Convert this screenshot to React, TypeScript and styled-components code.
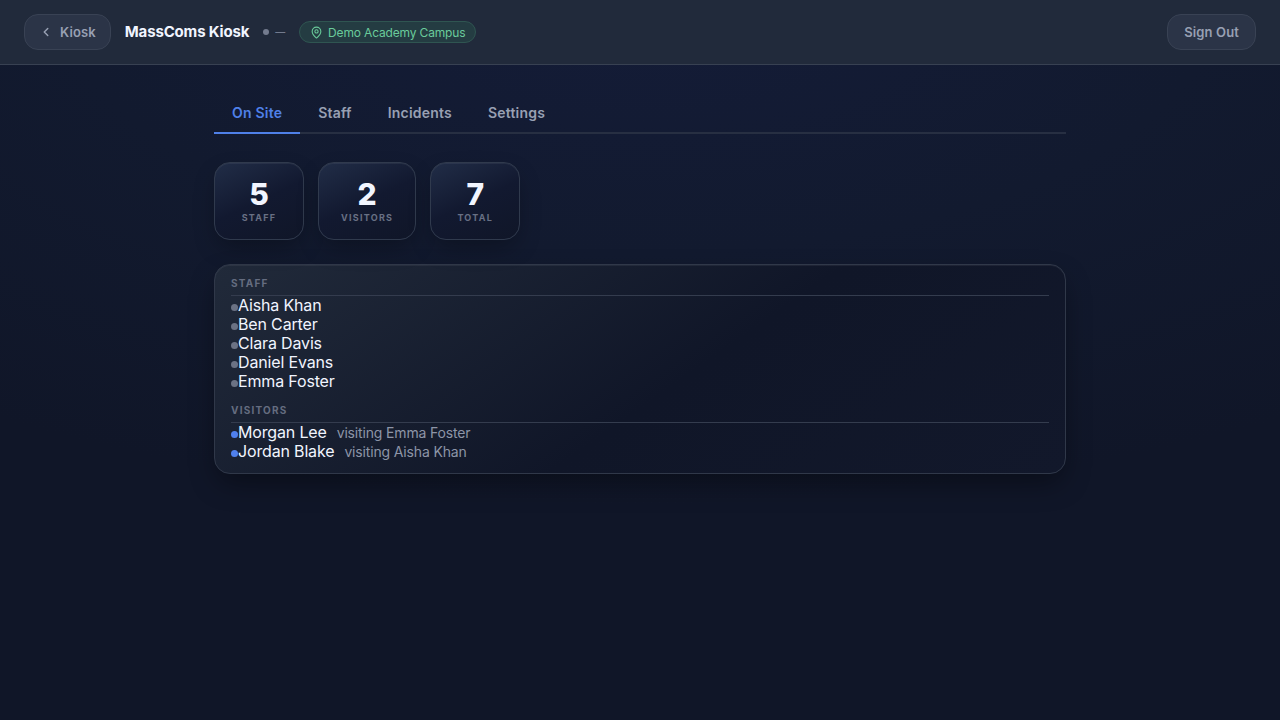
import React, { useState } from "react";
import styled, { createGlobalStyle } from "styled-components";
import { ChevronLeft, MapPin } from "lucide-react";

const GlobalStyle = createGlobalStyle`
  *, *::before, *::after { box-sizing: border-box; }
  html { background: #101628; }
  body {
    margin: 0;
    min-height: 100vh;
    font-family: Inter, "Liberation Sans", sans-serif;
    font-size: 16px;
    letter-spacing: -0.01em;
    color: #f1f5ff;
    -webkit-font-smoothing: antialiased;
    background: radial-gradient(ellipse 90% 70% at 50% 0%, #141c38 0%, #121a2f 50%, #101628 100%) no-repeat;
  }
  button { font-family: inherit; cursor: pointer; }
`;

const TopBar = styled.header`
  display: flex;
  align-items: center;
  gap: 14px;
  padding: 14px 24px;
  background: #212a3b;
  border-bottom: 1px solid #384152;
`;

const GhostButton = styled.button<{ $back?: boolean }>`
  display: inline-flex;
  align-items: center;
  gap: 7px;
  height: 36px;
  padding: 0 ${(p) => (p.$back ? 14 : 16)}px;
  border: 1px solid #394254;
  border-radius: 14px;
  background: #2b3447;
  color: #98a0b3;
  font-size: 13px;
  font-weight: 600;
  letter-spacing: 0.01em;
`;

const Brand = styled.h1`
  margin: 0;
  font-size: 15px;
  line-height: 20px;
  font-weight: 700;
`;

const Status = styled.div`
  display: flex;
  align-items: center;
  gap: 6px;
  color: #737b8e;
  font-size: 10px;
  line-height: 16px;
  font-weight: 600;
`;

const StatusDot = styled.span`
  width: 6px;
  height: 6px;
  border-radius: 50%;
  background: #737b8e;
`;

const SiteBadge = styled.div`
  display: flex;
  align-items: center;
  gap: 5px;
  height: 22px;
  padding: 0 10px;
  border: 1px solid #2f5551;
  border-radius: 11px;
  background: #243c42;
  color: #6acb9b;
  font-size: 12px;
`;

const Spacer = styled.div`
  flex: 1;
`;

const Main = styled.main`
  max-width: 900px;
  margin: 0 auto;
  padding: 28px 24px;
`;

const Tabs = styled.nav`
  display: flex;
  margin-bottom: 28px;
  box-shadow: inset 0 -2px 0 #272f42;
`;

const Tab = styled.button<{ $active: boolean }>`
  height: 41px;
  padding: 0 18px;
  border: 0;
  border-bottom: 2px solid ${(p) => (p.$active ? "#4f80e8" : "transparent")};
  background: none;
  color: ${(p) => (p.$active ? "#4f80e8" : "#98a0b3")};
  font-size: 14px;
  font-weight: 600;
  letter-spacing: 0.015em;
`;

const Stats = styled.div`
  display: flex;
  flex-wrap: wrap;
  gap: 14px;
  margin-bottom: 24px;
`;

const StatCard = styled.div`
  display: flex;
  flex-direction: column;
  align-items: center;
  min-width: 90px;
  height: 78px;
  padding: 16px 22px;
  border: 1px solid #303a4d;
  border-radius: 16px;
  background: linear-gradient(155deg, #212d47 0%, #121930 50%, #101628 100%);
  box-shadow: 0 10px 24px -4px rgba(0, 0, 0, 0.3), inset 0 1px 0 rgba(255, 255, 255, 0.06);
`;

const StatValue = styled.span`
  font-size: 30px;
  line-height: 30px;
  font-weight: 800;
`;

const StatLabel = styled.span`
  margin-top: 3px;
  font-size: 9px;
  line-height: 11px;
  font-weight: 700;
  letter-spacing: 0.14em;
  text-transform: uppercase;
  color: #687084;
`;

const Panel = styled.section`
  padding: 12px 16px;
  border: 1px solid #303849;
  border-radius: 16px;
  background: linear-gradient(145deg, #212a3a 0%, #101628 55%, #12182b 100%);
  box-shadow: 0 12px 28px -4px rgba(0, 0, 0, 0.4), inset 0 1px 0 rgba(255, 255, 255, 0.06);
`;

const Group = styled.div`
  & + & { margin-top: 13px; }
`;

const GroupTitle = styled.h2`
  margin: 0;
  padding-bottom: 6px;
  border-bottom: 1px solid #343c4e;
  font-size: 10px;
  line-height: 12px;
  font-weight: 700;
  letter-spacing: 0.12em;
  text-transform: uppercase;
  color: #656d80;
`;

const People = styled.ul`
  margin: 0;
  padding: 0;
  list-style: none;
`;

const Person = styled.li`
  display: flex;
  align-items: baseline;
  height: 19px;
  line-height: 19px;
`;

const PersonDot = styled.span<{ $visitor: boolean }>`
  align-self: center;
  width: 7px;
  height: 7px;
  margin-top: 4px;
  border-radius: 50%;
  background: ${(p) => (p.$visitor ? "#4f80ee" : "#6b7284")};
`;

const Visiting = styled.span`
  margin-left: 10px;
  font-size: 14px;
  color: #8d95a7;
`;

const TABS = ["On Site", "Staff", "Incidents", "Settings"];
const STAFF = ["Aisha Khan", "Ben Carter", "Clara Davis", "Daniel Evans", "Emma Foster"];
const VISITORS = [
  { name: "Morgan Lee", host: "Emma Foster" },
  { name: "Jordan Blake", host: "Aisha Khan" },
];
const STATS = [
  { label: "Staff", value: STAFF.length },
  { label: "Visitors", value: VISITORS.length },
  { label: "Total", value: STAFF.length + VISITORS.length },
];

export default function App() {
  const [active, setActive] = useState(TABS[0]);
  return (
    <>
      <GlobalStyle />
      <TopBar>
        <GhostButton type="button" $back>
          <ChevronLeft size={14} strokeWidth={2.5} />
          Kiosk
        </GhostButton>
        <Brand>MassComs Kiosk</Brand>
        <Status>
          <StatusDot />
          <span>—</span>
        </Status>
        <SiteBadge>
          <MapPin size={13} />
          Demo Academy Campus
        </SiteBadge>
        <Spacer />
        <GhostButton type="button">Sign Out</GhostButton>
      </TopBar>
      <Main>
        <Tabs>
          {TABS.map((tab) => (
            <Tab key={tab} type="button" $active={tab === active} onClick={() => setActive(tab)}>
              {tab}
            </Tab>
          ))}
        </Tabs>
        <Stats>
          {STATS.map((s) => (
            <StatCard key={s.label}>
              <StatValue>{s.value}</StatValue>
              <StatLabel>{s.label}</StatLabel>
            </StatCard>
          ))}
        </Stats>
        <Panel>
          <Group>
            <GroupTitle>Staff</GroupTitle>
            <People>
              {STAFF.map((name) => (
                <Person key={name}>
                  <PersonDot $visitor={false} />
                  {name}
                </Person>
              ))}
            </People>
          </Group>
          <Group>
            <GroupTitle>Visitors</GroupTitle>
            <People>
              {VISITORS.map((v) => (
                <Person key={v.name}>
                  <PersonDot $visitor />
                  {v.name}
                  <Visiting>visiting {v.host}</Visiting>
                </Person>
              ))}
            </People>
          </Group>
        </Panel>
      </Main>
    </>
  );
}
